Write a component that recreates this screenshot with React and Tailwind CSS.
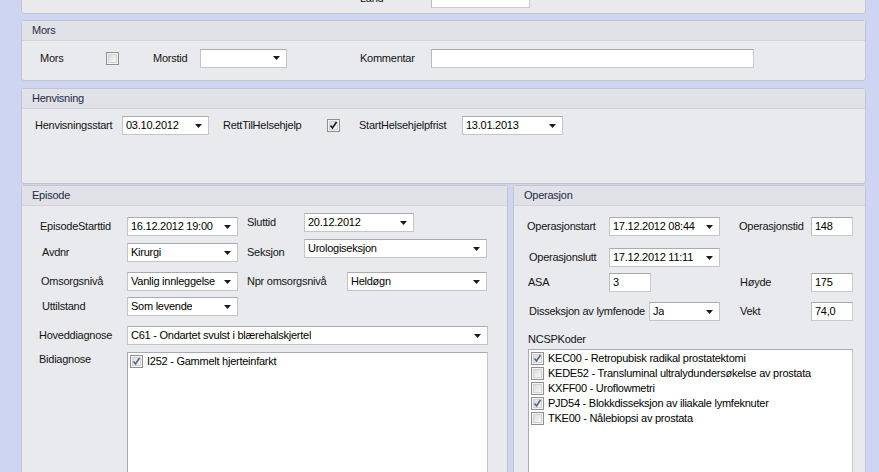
import React from 'react'

// Panel med grå tittelstripe, som i WinForms-skjemaet
function Panel({ title, className, children }) {
    return (
        <div className={`rounded-[3px] border border-[#c4c5ca] bg-[#e9eaee] ${className}`}>
            {title && (
                <div className="flex h-[20px] items-center border-b border-[#d3d4d9] bg-[#e1e2e7] px-[10px] text-[#1e2b48]">
                    {title}
                </div>
            )}
            {children}
        </div>
    )
}

function Arrow() {
    return (
        <svg width="7" height="4" viewBox="0 0 7 4" className="ml-auto mr-[6px] shrink-0">
            <path d="M0 0h7L3.5 4z" fill="#1a1a1a" />
        </svg>
    )
}

function Dropdown({ value, className }) {
    return (
        <div className={`flex h-[19px] shrink-0 items-center border border-[#c3c5ca] border-t-[#a9abb1] bg-white pl-[3px] text-black ${className}`}>
            <span className="truncate">{value}</span>
            <Arrow />
        </div>
    )
}

function TextBox({ value, className }) {
    return (
        <div className={`flex h-[19px] shrink-0 items-center border border-[#c8cad0] border-t-[#a5a7ad] border-l-[#b9bbc1] bg-white pl-[3px] text-black ${className}`}>
            {value}
        </div>
    )
}

function Check({ checked, tone = 'dark' }) {
    return (
        <span className="relative flex h-[13px] w-[13px] shrink-0 border border-[#8e8f8f] bg-[#f4f4f4] p-[1px]">
            <span className="h-full w-full border border-[#d2d2d2] bg-gradient-to-br from-[#dcdcdc] to-[#f8f8f8]" />
            {checked && (
                <svg width="11" height="11" viewBox="0 0 11 11" className="absolute left-[0px] top-[0px]">
                    <path
                        d="M2.5 5.5 L4.5 8 L8.5 2"
                        fill="none"
                        stroke={tone === 'dark' ? '#1a1a1a' : '#4c6590'}
                        strokeWidth="1.6"
                    />
                </svg>
            )}
        </span>
    )
}

function CheckItem({ checked, label }) {
    return (
        <div className="flex h-[15px] items-center pl-[2px] text-black">
            <Check checked={checked} tone="blue" />
            <span className="ml-[4px] whitespace-nowrap">{label}</span>
        </div>
    )
}

const ncsp = [
    { checked: true, label: 'KEC00 - Retropubisk radikal prostatektomi' },
    { checked: false, label: 'KEDE52 - Transluminal ultralydundersøkelse av prostata' },
    { checked: false, label: 'KXFF00 - Uroflowmetri' },
    { checked: true, label: 'PJD54 - Blokkdisseksjon av iliakale lymfeknuter' },
    { checked: false, label: 'TKE00 - Nålebiopsi av prostata' },
]

export default function App() {
    return (
        <div className="h-[472px] w-[879px] overflow-hidden bg-[#cdd5f3] pl-[21px] pr-[13px] font-['Liberation_Sans',Arial,sans-serif] text-[11px] leading-[13px] tracking-[-0.25px] text-[#141414]">
            {/* Forrige panel, nesten skjult over kanten */}
            <Panel className="-mt-[20px] h-[34px]">
                <div className="flex items-center pl-[338px] pt-[8px]">
                    <span className="w-[71px]">Land</span>
                    <TextBox className="w-[99px]" />
                </div>
            </Panel>

            <Panel title="Mors" className="mt-[6px] h-[61px]">
                <div className="flex items-center pl-[18px] pt-[7px]">
                    <span className="w-[66px]">Mors</span>
                    <Check />
                    <span className="ml-[34px] w-[47px]">Morstid</span>
                    <Dropdown className="w-[87px]" />
                    <span className="ml-[73px] w-[71px]">Kommentar</span>
                    <TextBox className="mt-[1px] w-[323px]" />
                </div>
            </Panel>

            <Panel title="Henvisning" className="mt-[7px] h-[96px]">
                <div className="flex items-center pl-[13px] pt-[7px]">
                    <span className="w-[87px]">Henvisningsstart</span>
                    <Dropdown value="03.10.2012" className="w-[87px]" />
                    <span className="ml-[14px] w-[104px]">RettTilHelsehjelp</span>
                    <Check checked />
                    <span className="ml-[19px] w-[103px]">StartHelsehjelpfrist</span>
                    <Dropdown value="13.01.2013" className="w-[101px]" />
                </div>
            </Panel>

            <div className="mt-[1px] flex gap-[5px]">
                <Panel title="Episode" className="h-[300px] w-[487px] shrink-0">
                    <div className="flex flex-col">
                        <div className="mt-[7px] flex items-start">
                            <div className="mt-[4px] flex items-center">
                                <span className="w-[105px] pl-[18px]">EpisodeStarttid</span>
                                <Dropdown value="16.12.2012 19:00" className="w-[111px]" />
                            </div>
                            <div className="flex items-center">
                                <span className="ml-[9px] w-[57px]">Sluttid</span>
                                <Dropdown value="20.12.2012" className="w-[110px]" />
                            </div>
                        </div>

                        <div className="mt-[3px] flex items-start">
                            <div className="mt-[4px] flex items-center">
                                <span className="w-[105px] pl-[20px]">Avdnr</span>
                                <Dropdown value="Kirurgi" className="w-[111px]" />
                                <span className="ml-[9px] w-[57px]">Seksjon</span>
                            </div>
                            <Dropdown value="Urologiseksjon" className="w-[183px]" />
                        </div>

                        <div className="mt-[10px] flex items-center">
                            <span className="w-[105px] pl-[19px]">Omsorgsnivå</span>
                            <Dropdown value="Vanlig innleggelse" className="w-[111px]" />
                            <span className="ml-[9px] w-[100px]">Npr omsorgsnivå</span>
                            <Dropdown value="Heldøgn" className="w-[140px]" />
                        </div>

                        <div className="mt-[6px] flex items-center">
                            <span className="w-[105px] pl-[20px]">Uttilstand</span>
                            <Dropdown value="Som levende" className="w-[111px]" />
                        </div>

                        <div className="mt-[10px] flex items-center">
                            <span className="w-[105px] pl-[17px]">Hoveddiagnose</span>
                            <Dropdown value="C61  - Ondartet svulst i blærehalskjertel" className="w-[361px] whitespace-pre" />
                        </div>

                        <div className="mt-[7px] flex items-start">
                            <span className="mt-[1px] w-[105px] pl-[17px]">Bidiagnose</span>
                            <div className="h-[140px] w-[361px] border border-[#a9abb1] border-r-[#c3c5ca] border-b-[#c3c5ca] bg-white pt-[1px]">
                                <CheckItem checked label="I252 - Gammelt hjerteinfarkt" />
                            </div>
                        </div>
                    </div>
                </Panel>

                <Panel title="Operasjon" className="h-[300px] flex-1">
                    <div className="flex flex-col">
                        <div className="mt-[11px] flex items-center">
                            <span className="w-[95px] pl-[13px]">Operasjonstart</span>
                            <Dropdown value="17.12.2012 08:44" className="w-[111px]" />
                            <span className="ml-[19px] w-[72px]">Operasjonstid</span>
                            <TextBox value="148" className="w-[42px]" />
                        </div>

                        <div className="mt-[12px] flex items-center">
                            <span className="w-[95px] pl-[15px]">Operasjonslutt</span>
                            <Dropdown value="17.12.2012 11:11" className="w-[111px]" />
                        </div>

                        <div className="mt-[6px] flex items-center">
                            <span className="w-[95px] pl-[14px]">ASA</span>
                            <TextBox value="3" className="w-[42px]" />
                            <span className="ml-[89px] w-[71px]">Høyde</span>
                            <TextBox value="175" className="w-[42px]" />
                        </div>

                        <div className="mt-[10px] flex items-center">
                            <span className="w-[135px] whitespace-nowrap pl-[15px]">Disseksjon av lymfenode</span>
                            <Dropdown value="Ja" className="w-[71px]" />
                            <span className="ml-[20px] w-[71px]">Vekt</span>
                            <TextBox value="74,0" className="w-[42px]" />
                        </div>

                        <span className="mt-[12px] pl-[14px]">NCSPKoder</span>

                        <div className="ml-[14px] mt-[3px] h-[140px] w-[325px] border border-[#a9abb1] border-r-[#c3c5ca] border-b-[#c3c5ca] bg-white pt-[1px]">
                            {ncsp.map((item) => (
                                <CheckItem key={item.label} checked={item.checked} label={item.label} />
                            ))}
                        </div>
                    </div>
                </Panel>
            </div>
        </div>
    )
}
